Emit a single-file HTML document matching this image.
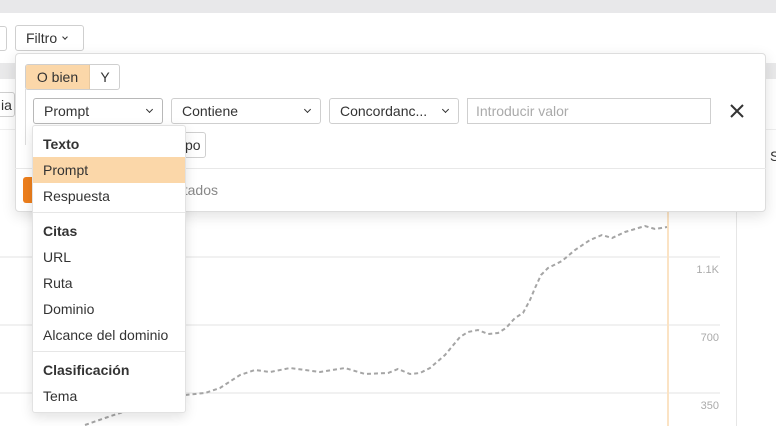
<!DOCTYPE html>
<html><head><meta charset="utf-8"><style>
*{box-sizing:border-box;margin:0;padding:0}
body{width:776px;height:426px;overflow:hidden;background:#fff;font-family:"Liberation Sans",Arial,sans-serif;color:#333;position:relative;font-size:14px}
.a{position:absolute}
.btn{position:absolute;border:1px solid #cfcfcf;border-radius:3px;background:#fff;display:flex;align-items:center;padding-left:10px;font-size:14px;color:#333}
.chev{position:absolute;right:10px;top:8px;width:5px;height:5px;border-right:1.4px solid #333;border-bottom:1.4px solid #333;transform:rotate(45deg)}
.it{position:absolute;left:0;width:152px;height:26px;line-height:26px;padding-left:10px;font-size:14px;color:#333}
.h{font-weight:bold}
</style></head><body>
<div class="a" style="left:0;top:0;width:776px;height:13px;background:#e8e8ea"></div>
<div class="btn" style="left:-10px;top:26px;width:17px;height:25px"></div>
<div class="btn" style="left:15px;top:25px;width:69px;height:26px;padding-left:10px">Filtro<span style="margin-left:6px;display:inline-block;width:4px;height:4px;border-right:1.3px solid #333;border-bottom:1.3px solid #333;transform:rotate(45deg);margin-top:-3px"></span></div>
<div class="a" style="left:0;top:63px;width:776px;height:16px;background:#e9e9ea"></div>
<div class="btn" style="left:-10px;top:92px;width:25px;height:25px;padding-left:10px">ia</div>
<div class="a" style="left:0;top:129px;width:776px;height:1px;background:#eee"></div>
<!-- chart -->
<div class="a" style="left:0;top:256px;width:720px;height:2px;background:#f1f1f1"></div>
<div class="a" style="left:0;top:324px;width:720px;height:2px;background:#f1f1f1"></div>
<div class="a" style="left:0;top:392px;width:720px;height:2px;background:#f1f1f1"></div>
<div class="a" style="left:680px;top:264px;width:39px;text-align:right;font-size:11px;color:#aaa">1.1K</div>
<div class="a" style="left:680px;top:332px;width:39px;text-align:right;font-size:11px;color:#aaa">700</div>
<div class="a" style="left:680px;top:400px;width:39px;text-align:right;font-size:11px;color:#aaa">350</div>
<div class="a" style="left:667px;top:212px;width:2px;height:214px;background:#fbe3c4"></div>
<div class="a" style="left:736px;top:200px;width:1px;height:226px;background:#e6e6e6"></div>
<div class="a" style="left:770px;top:148px;font-size:14px">S</div>
<svg class="a" style="left:0;top:0" width="776" height="426"><polyline fill="none" stroke="#a5a5a5" stroke-width="2" stroke-dasharray="4 3" points="85,425 105,418 123,412 150,405 185,395 205,393 220,388 240,375 255,370 270,372 290,368 320,372 345,368 365,374 388,373 398,369 410,374 420,373 430,368 445,355 460,337 468,332 478,330 488,334 498,333 506,328 515,318 523,313 530,300 535,288 541,275 548,268 562,261 575,250 590,240 602,235 612,238 625,232 645,226 655,229 667,227"/></svg>
<!-- panel -->
<div class="a" style="left:15px;top:53px;width:751px;height:159px;background:#fff;border:1px solid #ddd;border-radius:4px;box-shadow:0 4px 14px rgba(0,0,0,.12)"></div>
<div class="a" style="left:25px;top:64px;width:95px;height:26px;border:1px solid #cfcfcf;border-radius:3px;overflow:hidden">
<div class="a" style="left:0;top:0;width:64px;height:24px;background:#fbd7a9;border-right:1px solid #e8c9a0;line-height:24px;text-align:center;font-size:14px">O bien</div>
<div class="a" style="left:64px;top:0;width:30px;height:24px;line-height:24px;text-align:center;font-size:14px">Y</div></div>
<div class="a" style="left:25px;top:89px;width:1px;height:56px;background:#ddd"></div>
<div class="btn" style="left:33px;top:98px;width:130px;height:26px;border-color:#b8b8b8">Prompt<span class="chev"></span></div>
<div class="btn" style="left:171px;top:98px;width:150px;height:26px">Contiene<span class="chev"></span></div>
<div class="btn" style="left:329px;top:98px;width:130px;height:26px">Concordanc...<span class="chev"></span></div>
<div class="btn" style="left:467px;top:98px;width:244px;height:26px;border-radius:0;color:#aaa;padding-left:8px">Introducir valor</div>
<svg class="a" style="left:729px;top:103px" width="16" height="16"><path d="M2 2L14 14M14 2L2 14" stroke="#333" stroke-width="2"/></svg>
<div class="btn" style="left:150px;top:132px;width:56px;height:26px;padding-left:34px">po</div>
<div class="a" style="left:15px;top:168px;width:751px;height:1px;background:#e8e8e8"></div>
<div class="a" style="left:23px;top:177px;width:40px;height:26px;background:#ee7f1c;border-radius:3px"></div>
<div class="a" style="left:100px;top:182px;width:118px;text-align:right;font-size:14px;color:#888">resultados</div>
<!-- dropdown -->
<div class="a" style="left:32px;top:125px;width:154px;height:288px;background:#fff;border:1px solid #e2e2e2;border-radius:3px;box-shadow:0 4px 12px rgba(0,0,0,.12)">
<div class="it h" style="top:5px">Texto</div>
<div class="it" style="top:31px;background:#fbd7a9">Prompt</div>
<div class="it" style="top:57px">Respuesta</div>
<div class="a" style="left:0;top:86px;width:152px;height:1px;background:#e6e6e6"></div>
<div class="it h" style="top:92px">Citas</div>
<div class="it" style="top:118px">URL</div>
<div class="it" style="top:144px">Ruta</div>
<div class="it" style="top:170px">Dominio</div>
<div class="it" style="top:196px">Alcance del dominio</div>
<div class="a" style="left:0;top:225px;width:152px;height:1px;background:#e6e6e6"></div>
<div class="it h" style="top:231px">Clasificación</div>
<div class="it" style="top:257px">Tema</div>
</div>
</body></html>
